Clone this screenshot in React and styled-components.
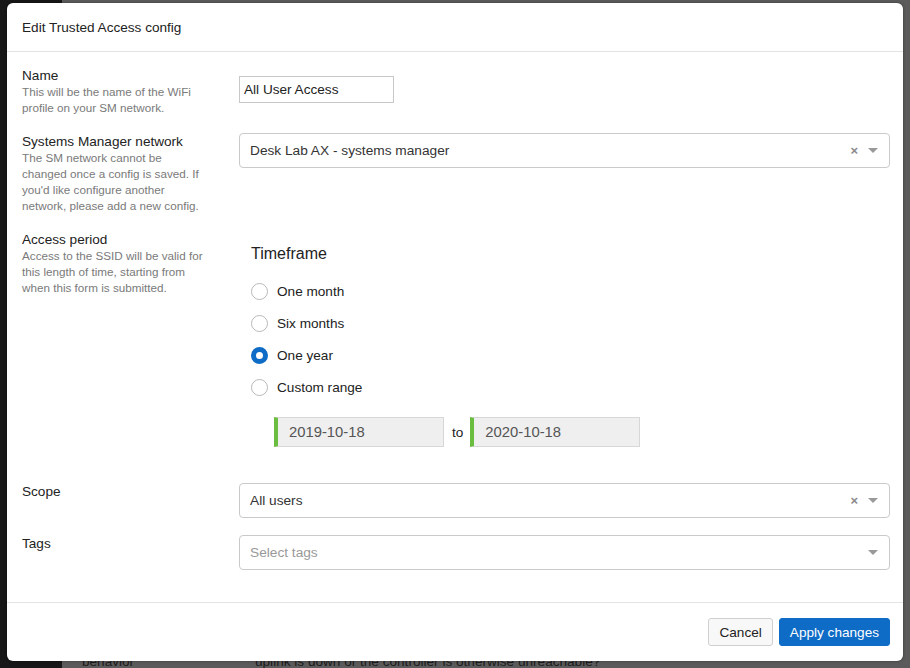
import React, { useState } from 'react';
import styled, { createGlobalStyle } from 'styled-components';

const GlobalStyle = createGlobalStyle`
  html, body {
    margin: 0;
    padding: 0;
    width: 910px;
    height: 668px;
    overflow: hidden;
    font-family: "Liberation Sans", Arial, Helvetica, sans-serif;
  }
`;

const Page = styled.div`
  position: relative;
  width: 910px;
  height: 668px;
  display: flex;
  background: #5b5b5b;
  overflow: hidden;
`;

const Sidebar = styled.div`
  width: 62px;
  flex: none;
  background: #171717;
`;

const Behind = styled.div`
  flex: 1;
  padding-top: 654px;
  display: flex;
  font-size: 13.6px;
  color: #1c1c1c;
`;

const BehindCell = styled.div`
  box-sizing: border-box;
  width: ${(p) => p.$w || 'auto'};
  padding-left: 20px;
  white-space: nowrap;
`;

const Modal = styled.div`
  position: absolute;
  left: 7px;
  top: 3px;
  width: 896px;
  height: 658px;
  background: #fff;
  border-radius: 6px;
  display: flex;
  flex-direction: column;
  box-shadow: 0 0 3px rgba(0, 0, 0, 0.4);
`;

const Header = styled.div`
  height: 48px;
  display: flex;
  align-items: center;
  padding: 0 15px;
  border-bottom: 1px solid #e3e3e3;
  font-size: 13.6px;
  color: #222;
`;

const Body = styled.div`
  flex: 1;
  padding: 15px 13px 0 15px;
`;

const Row = styled.div`
  display: grid;
  grid-template-columns: 217px 1fr;
  margin-bottom: ${(p) => p.$gap || 17}px;
`;

const LabelCol = styled.div`
  display: flex;
  flex-direction: column;
`;

const Label = styled.div`
  font-size: 13.6px;
  line-height: 17px;
  color: #222;
`;

const Help = styled.div`
  font-size: 11.7px;
  line-height: 16px;
  color: #7a7a7a;
  width: 184px;
`;

const TextInput = styled.input`
  box-sizing: border-box;
  width: 155px;
  height: 27px;
  margin-top: 9px;
  padding: 0 4px;
  border: 1px solid #c8c8c8;
  font-family: inherit;
  font-size: 13.6px;
  color: #222;
  outline: none;
`;

const Select = styled.div`
  box-sizing: border-box;
  height: 35px;
  border: 1px solid #cacaca;
  border-radius: 4px;
  display: flex;
  align-items: center;
  padding: 0 11px 0 10px;
  font-size: 13.7px;
  color: ${(p) => (p.$placeholder ? '#999' : '#333')};
`;

const SelectValue = styled.span`
  flex: 1;
`;

const Clear = styled.span`
  font-size: 13px;
  font-weight: bold;
  color: #8a8a8a;
  margin-right: 10px;
  line-height: 1;
`;

const Caret = styled.span`
  width: 0;
  height: 0;
  border-left: 5px solid transparent;
  border-right: 5px solid transparent;
  border-top: 5px solid #999;
`;

const Timeframe = styled.div`
  padding: 13px 0 0 12px;
`;

const Heading = styled.div`
  font-size: 16px;
  line-height: 20px;
  color: #222;
  margin-bottom: 11px;
`;

const RadioRow = styled.label`
  height: 32px;
  display: flex;
  align-items: center;
  gap: 9px;
  font-size: 13.6px;
  color: #222;
  cursor: pointer;
`;

const RadioCircle = styled.span`
  box-sizing: border-box;
  width: 17px;
  height: 17px;
  border-radius: 50%;
  background: #fff;
  border: ${(p) => (p.$on ? '5px solid #0e6bc6' : '1px solid #b9b9b9')};
`;

const DateRow = styled.div`
  display: flex;
  align-items: center;
  margin: 14px 0 0 23px;
`;

const DateBox = styled.div`
  box-sizing: border-box;
  width: 170px;
  height: 30px;
  display: flex;
  align-items: center;
  padding-left: 11px;
  background: #efefef;
  border: 1px solid #d7d7d7;
  border-left: 4px solid #6bbd3f;
  font-size: 14.8px;
  color: #555;
`;

const To = styled.span`
  margin: 0 7px 0 8px;
  font-size: 13.6px;
  color: #222;
`;

const Footer = styled.div`
  border-top: 1px solid #e3e3e3;
  padding: 15px 13px 15px 15px;
  display: flex;
  justify-content: flex-end;
  gap: 6px;
`;

const Button = styled.button`
  height: 28px;
  padding: 0 10px;
  border-radius: 3px;
  font-family: inherit;
  font-size: 13.6px;
  cursor: pointer;
  border: 1px solid ${(p) => (p.$primary ? '#0e6bc6' : '#cfcfcf')};
  background: ${(p) => (p.$primary ? '#0e6bc6' : '#f8f8f8')};
  color: ${(p) => (p.$primary ? '#fff' : '#222')};
`;

const options = ['One month', 'Six months', 'One year', 'Custom range'];

export default function App() {
  const [period, setPeriod] = useState('One year');

  return (
    <>
      <GlobalStyle />
      <Page>
        <Sidebar />
        <Behind>
          <BehindCell $w="173px">behavior</BehindCell>
          <BehindCell>uplink is down or the controller is otherwise unreachable?</BehindCell>
        </Behind>

        <Modal>
          <Header>Edit Trusted Access config</Header>
          <Body>
            <Row>
              <LabelCol>
                <Label>Name</Label>
                <Help>This will be the name of the WiFi profile on your SM network.</Help>
              </LabelCol>
              <div>
                <TextInput defaultValue="All User Access" />
              </div>
            </Row>

            <Row>
              <LabelCol>
                <Label>Systems Manager network</Label>
                <Help>
                  The SM network cannot be changed once a config is saved. If you'd like configure
                  another network, please add a new config.
                </Help>
              </LabelCol>
              <div>
                <Select>
                  <SelectValue>Desk Lab AX - systems manager</SelectValue>
                  <Clear>×</Clear>
                  <Caret />
                </Select>
              </div>
            </Row>

            <Row $gap={36}>
              <LabelCol>
                <Label>Access period</Label>
                <Help>
                  Access to the SSID will be valid for this length of time, starting from when this
                  form is submitted.
                </Help>
              </LabelCol>
              <Timeframe>
                <Heading>Timeframe</Heading>
                {options.map((o) => (
                  <RadioRow key={o} onClick={() => setPeriod(o)}>
                    <RadioCircle $on={period === o} />
                    {o}
                  </RadioRow>
                ))}
                <DateRow>
                  <DateBox>2019-10-18</DateBox>
                  <To>to</To>
                  <DateBox>2020-10-18</DateBox>
                </DateRow>
              </Timeframe>
            </Row>

            <Row>
              <LabelCol>
                <Label>Scope</Label>
              </LabelCol>
              <Select>
                <SelectValue>All users</SelectValue>
                <Clear>×</Clear>
                <Caret />
              </Select>
            </Row>

            <Row>
              <LabelCol>
                <Label>Tags</Label>
              </LabelCol>
              <Select $placeholder>
                <SelectValue>Select tags</SelectValue>
                <Caret />
              </Select>
            </Row>
          </Body>
          <Footer>
            <Button>Cancel</Button>
            <Button $primary>Apply changes</Button>
          </Footer>
        </Modal>
      </Page>
    </>
  );
}
